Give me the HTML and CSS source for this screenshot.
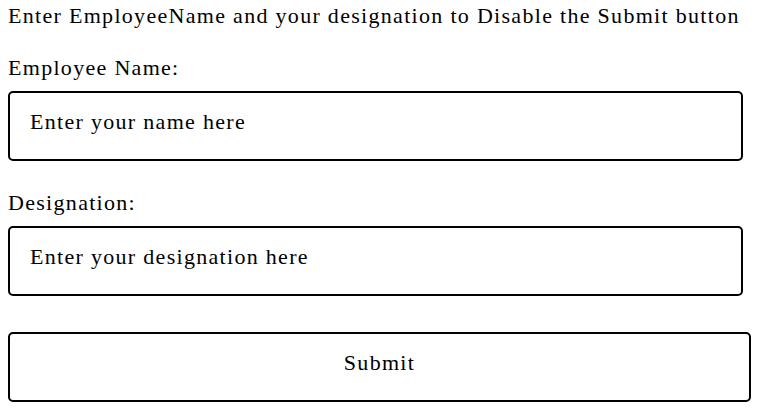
FILE: index.html
```html
<!DOCTYPE html>
<html>
<head>
<meta charset="utf-8">
<link rel="stylesheet" href="styles.css">
</head>
<body>
<div class="page">
  <p class="intro">Enter EmployeeName and your designation to Disable the Submit button</p>
  <form class="form">
    <label class="field">
      <span class="label">Employee Name:</span>
      <input class="input" type="text" placeholder="Enter your name here">
    </label>
    <label class="field">
      <span class="label">Designation:</span>
      <input class="input" type="text" placeholder="Enter your designation here">
    </label>
    <button class="submit" type="button">Submit</button>
  </form>
</div>
</body>
</html>
```

FILE: styles.css
```css
html, body {
  margin: 0;
  background: #fff;
}
body {
  font-family: "Liberation Serif", "Times New Roman", serif;
  font-size: 22px;
  letter-spacing: 1.3px;
  color: #000;
}
.page {
  padding: 4px 8px 0;
}
.intro {
  margin: 0;
  line-height: 24px;
}
.form {
  display: flex;
  flex-direction: column;
  margin-top: 28px;
}
.field {
  display: flex;
  flex-direction: column;
  margin-bottom: 30px;
}
.field:last-of-type {
  margin-bottom: 36px;
}
.label {
  line-height: 24px;
  margin-bottom: 11px;
}
.input {
  box-sizing: border-box;
  width: 735px;
  height: 70px;
  border: 2px solid #000;
  border-radius: 5px;
  padding: 0 20px 8px;
  font-family: "Liberation Serif", "Times New Roman", serif;
  font-size: 22px;
  letter-spacing: 1.3px;
  color: #000;
  background: #fff;
  outline: none;
}
.input::placeholder {
  color: #000;
  opacity: 1;
}
.submit {
  box-sizing: border-box;
  width: 743px;
  height: 70px;
  border: 2px solid #000;
  border-radius: 5px;
  padding: 0 0 8px;
  background: #fff;
  font-family: "Liberation Serif", "Times New Roman", serif;
  font-size: 22px;
  letter-spacing: 1.3px;
  color: #000;
}
```
